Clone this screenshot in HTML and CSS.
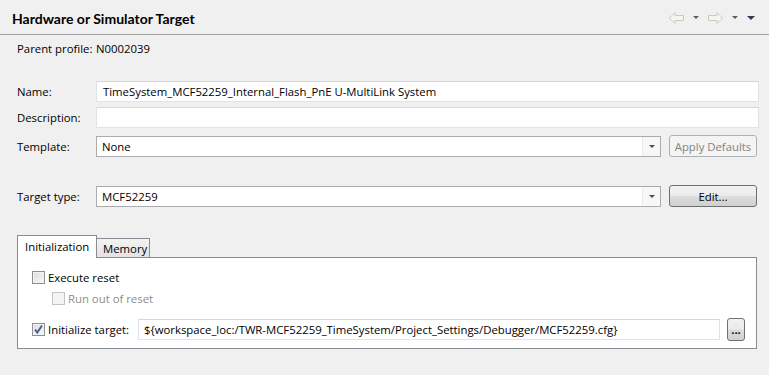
FILE: index.html
```html
<!DOCTYPE html>
<html>
<head>
    <meta charset="UTF-8">
    <title>Hardware or Simulator Target</title>
    <link rel="stylesheet" href="styles.css">
</head>
<body>
    <div class="header">
        <div class="title">Hardware or Simulator Target</div>
        <div class="toolbar">
            <svg class="nav-arrow" width="15" height="12" viewBox="0 0 15 12">
                <path d="M0.5 6 L6 0.5 L6 3.5 L14.5 3.5 L14.5 8.5 L6 8.5 L6 11.5 Z" fill="#f6f6ee" stroke="#c9c9c1"/>
            </svg>
            <span class="drop"></span>
            <svg class="nav-arrow" width="15" height="12" viewBox="0 0 15 12">
                <path d="M14.5 6 L9 0.5 L9 3.5 L0.5 3.5 L0.5 8.5 L9 8.5 L9 11.5 Z" fill="#f6f6ee" stroke="#c9c9c1"/>
            </svg>
            <span class="drop"></span>
            <span class="drop menu"></span>
        </div>
    </div>

    <div class="content">
        <!-- Profile -->
        <div class="row parent">
            <div>Parent profile:</div>
            <div>N0002039</div>
        </div>

        <!-- General settings -->
        <div class="row name-row">
            <label>Name:</label>
            <div class="text wide">TimeSystem_MCF52259_Internal_Flash_PnE U-MultiLink System</div>
        </div>
        <div class="row desc-row">
            <label>Description:</label>
            <div class="text wide"></div>
        </div>
        <div class="row tmpl-row">
            <label>Template:</label>
            <div class="combo"><span>None</span><span class="combo-btn"><i></i></span></div>
            <button class="btn" disabled>Apply Defaults</button>
        </div>
        <div class="row target-row">
            <label>Target type:</label>
            <div class="combo"><span>MCF52259</span><span class="combo-btn"><i></i></span></div>
            <button class="btn">Edit...</button>
        </div>

        <!-- Tabs -->
        <div class="tabs">
            <div class="tab active">Initialization</div>
            <div class="tab">Memory</div>
        </div>
        <div class="panel">
            <div class="check-row">
                <span class="check"></span>
                <span>Execute reset</span>
            </div>
            <div class="check-row sub disabled">
                <span class="check"></span>
                <span>Run out of reset</span>
            </div>
            <div class="check-row init-row">
                <span class="check checked">
                    <svg width="11" height="11" viewBox="0 0 11 11"><path d="M2 5.5 L4.3 8.5 L9 1.5" fill="none" stroke="#4a5f9e" stroke-width="2"/></svg>
                </span>
                <span class="init-label">Initialize target:</span>
                <div class="text path">${workspace_loc:/TWR-MCF52259_TimeSystem/Project_Settings/Debugger/MCF52259.cfg}</div>
                <button class="btn dots">...</button>
            </div>
        </div>
    </div>
</body>
</html>
```
FILE: styles.css
```css
body { margin: 0; background: #f0f0f0; color: #000; font-family: "Open Sans", sans-serif; font-size: 11.35px; }

.header { height: 35px; border-bottom: 1px solid #a0a0a0; display: flex; align-items: center; justify-content: space-between; padding: 2px 14px 0 12px; box-sizing: border-box; }
.title { font-family: Lato, sans-serif; font-weight: bold; font-size: 14px; }
.toolbar { display: flex; align-items: center; margin-top: -1px; }
.nav-arrow { display: block; margin-right: 9px; }
.drop { width: 0; height: 0; border-left: 3px solid transparent; border-right: 3px solid transparent; border-top: 3px solid #5c5c5c; margin-right: 9px; }
.drop.menu { border-left-width: 4px; border-right-width: 4px; border-top: 4px solid #3a3458; margin-right: 0; }

.content { padding: 0 10px 0 17px; }
.row { display: grid; grid-template-columns: 79px 1fr 98px; align-items: center; }
.parent { margin-top: 5px; height: 16px; }
.name-row { margin-top: 25px; }
.desc-row { margin-top: 5px; }
.tmpl-row { margin-top: 7px; }
.target-row { margin-top: 28px; }

.text { height: 21px; box-sizing: border-box; background: #fff; border: 1px solid #e2e3ea; border-top-color: #d5d7df; padding: 0 6px; line-height: 19px; white-space: nowrap; overflow: hidden; }
.wide { grid-column: 2 / 4; }

.combo { height: 21px; box-sizing: border-box; background: #fff; border: 1px solid #acacac; display: flex; justify-content: space-between; line-height: 19px; padding-left: 5px; }
.combo-btn { width: 17px; border-left: 1px solid #eaeaea; background: #f7f7f7; display: flex; align-items: center; justify-content: center; }
.combo-btn i { width: 0; height: 0; border-left: 3px solid transparent; border-right: 3px solid transparent; border-top: 3px solid #4d4d4d; margin-top: 1px; }

.btn { font: inherit; height: 22px; width: 88px; margin-left: 8px; padding: 0; border: 1px solid #707070; border-radius: 3px; background: linear-gradient(#f2f2f2 0%, #ebebeb 48%, #dddddd 52%, #cfcfcf 100%); color: #000; }
.btn:disabled { border-color: #adb2b5; background: #f4f4f4; color: #838383; }

.tabs { display: flex; align-items: flex-end; margin-top: 28px; height: 22px; }
.tab { box-sizing: border-box; border: 1px solid #898c95; border-bottom: none; padding: 0 6px; }
.tab.active { width: 80px; height: 23px; background: #fff; line-height: 21px; position: relative; z-index: 1; margin-bottom: -1px; padding-left: 7px; }
.tab:not(.active) { width: 54px; height: 19px; margin-left: -1px; background: linear-gradient(#f3f3f3, #e3e3e3); line-height: 19px; padding-left: 6px; }

.panel { width: 740px; height: 92px; box-sizing: border-box; background: #fff; border: 1px solid #898c95; padding: 13px 0 0 14px; }
.check-row { display: flex; align-items: center; height: 13px; }
.check-row.sub { margin-top: 8px; margin-left: 20px; }
.check-row.init-row { margin-top: 13px; height: 23px; }
.check { width: 13px; height: 13px; box-sizing: border-box; border: 1px solid #8e8f8f; background: linear-gradient(135deg, #dcdcdc, #f9f9f9); box-shadow: inset 0 0 0 1px #f3f3f3; margin-right: 3px; display: flex; align-items: center; justify-content: center; }
.check svg { display: block; }
.disabled { color: #8d8d8d; }
.disabled .check { border-color: #c4c4c4; background: #f4f4f4; box-shadow: none; }
.init-label { width: 90px; }
.path { width: 582px; padding-left: 5px; margin-top: -1px; }
.btn.dots { width: 18px; height: 23px; margin-left: 7px; font-weight: bold; line-height: 10px; }
```
